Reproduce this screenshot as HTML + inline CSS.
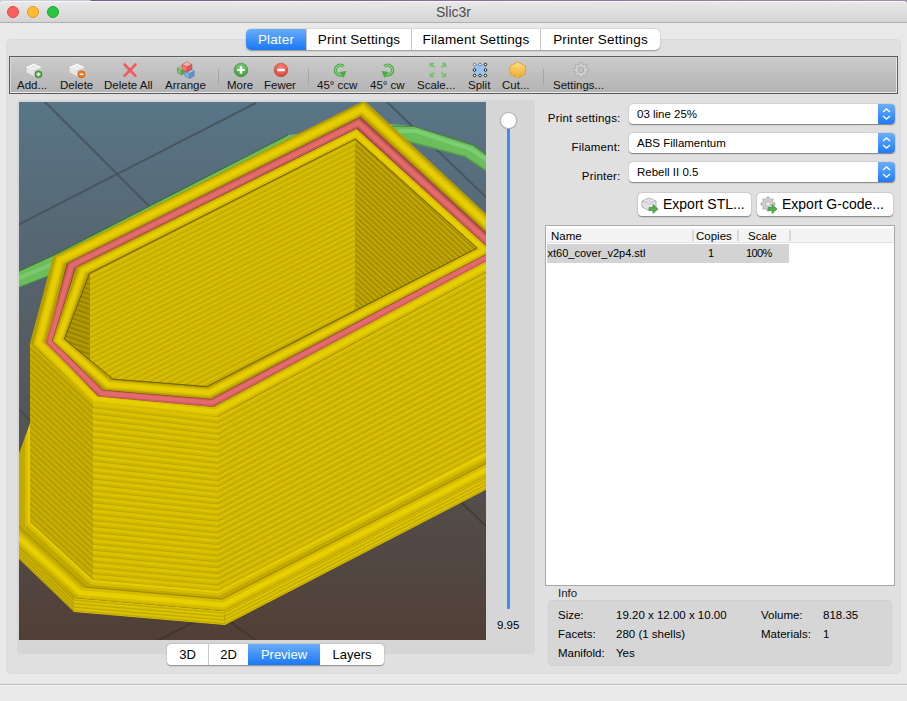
<!DOCTYPE html>
<html><head><meta charset="utf-8">
<style>
*{margin:0;padding:0;box-sizing:border-box}
html,body{width:907px;height:701px;overflow:hidden;background:#e9e9e9;font-family:"Liberation Sans",sans-serif;color:#000}
.abs{position:absolute}
#desk{left:0;top:0;width:907px;height:5px;background:linear-gradient(90deg,#c9ced8 0,#c3c8d2 90px,#7a5a8a 91px,#8c6a9a 50%,#a58aae 100%)}
#title{left:0;top:1px;width:907px;height:22px;background:linear-gradient(#e9e9e9,#d4d4d4);border-bottom:1px solid #b0b0b0;border-radius:4px 4px 0 0;box-shadow:inset 0 1px #f7f7f7}
.tl{top:5px;width:12px;height:12px;border-radius:50%}
#ttext{left:0;width:907px;top:3px;text-align:center;font-size:14px;color:#4d4d4d}
#body{left:0;top:23px;width:907px;height:678px;background:#e9e9e9}
#group{left:6px;top:39px;width:895px;height:635px;background:#e0e0e0;border:1px solid #dadada;border-radius:5px}
#tabs{left:246px;top:29px;width:414px;height:21px;background:#fff;border-radius:5px;box-shadow:0 0.5px 1.5px rgba(0,0,0,.35);font-size:13.5px;letter-spacing:0.15px}
.tab{position:absolute;top:0;height:21px;line-height:21px;text-align:center}
#toolbar{left:9px;top:56px;width:889px;height:38px;border:1px solid #5b5b5b;background:linear-gradient(#cbcbcb,#b3b3b3)}
#toolbar:after{content:"";position:absolute;left:0;top:0;right:0;bottom:0;border:1px solid #e9e9e9;border-top-color:#d9d9d9;border-left-color:#d9d9d9}
.tbt{position:absolute;top:79px;font-size:11.5px;white-space:nowrap;color:#111}
.sep{position:absolute;top:69px;width:1px;height:16px;background:#a6a6a6}
#frame{left:17px;top:100px;width:518px;height:554px;background:#d6d6d6;border-radius:4px}
#canvas{left:19px;top:102px;width:467px;height:538px;overflow:hidden}
#seg{left:167px;top:644px;width:217px;height:21px;background:#fff;border-radius:4px;box-shadow:0 0.5px 1.5px rgba(0,0,0,.4);font-size:13px}
.lbl{position:absolute;font-size:11.5px;white-space:nowrap;text-align:right;letter-spacing:0.2px;width:120px}
.combo{position:absolute;left:629px;width:266px;height:20px;background:#fff;border-radius:4px;box-shadow:0 0.5px 1.2px rgba(0,0,0,.45);font-size:11.5px}
.combo span{position:absolute;left:8px;top:4px}
.step{position:absolute;right:0;top:0;width:17px;height:20px;background:linear-gradient(#6aaefc,#1f7bf6);border-radius:0 4px 4px 0}
.btn{position:absolute;top:193px;height:23px;background:#fff;border-radius:4px;box-shadow:0 0.5px 1.5px rgba(0,0,0,.45);font-size:14px}
#list{left:545px;top:225px;width:350px;height:361px;background:#fff;border:1px solid #a9a9a9}
#info{left:548px;top:600px;width:344px;height:66px;background:#d6d6d6;border:1px solid #d0d0d0;border-radius:5px}
.it{position:absolute;font-size:11.5px;white-space:nowrap}
#status{left:0;top:684px;width:907px;height:17px;background:#e9e9e9;border-top:1px solid #bdbdbd;box-shadow:inset 0 1px #f7f7f7}
</style></head><body>
<div class="abs" id="body"></div>
<div class="abs" id="desk"></div>
<div class="abs" id="title">
 <div class="abs tl" style="left:7px;background:#fc605c;border:0.5px solid #de4a46"></div>
 <div class="abs tl" style="left:27px;background:#fdbb2f;border:0.5px solid #dc9c1d"></div>
 <div class="abs tl" style="left:47px;background:#2ac640;border:0.5px solid #1ea32f"></div>
 <div class="abs" id="ttext">Slic3r</div>
</div>
<div class="abs" id="group"></div>
<div class="abs" id="status"></div>

<!-- tabs -->
<div class="abs" id="tabs">
 <div class="tab" style="left:0;width:60px;background:linear-gradient(#69acfb,#1a78f5);color:#fff;border-radius:5px 0 0 5px">Plater</div>
 <div class="tab" style="left:60px;width:105px;border-left:1px solid #c8c8c8">Print Settings</div>
 <div class="tab" style="left:165px;width:129px;border-left:1px solid #c8c8c8">Filament Settings</div>
 <div class="tab" style="left:294px;width:120px;border-left:1px solid #c8c8c8">Printer Settings</div>
</div>

<!-- toolbar -->
<div class="abs" id="toolbar"></div>
<div id="tbitems">
<svg class="abs" style="left:0;top:56px" width="620" height="30" viewBox="0 56 620 30">
 <defs>
  <linearGradient id="brk" x1="0" y1="0" x2="1" y2="1"><stop offset="0" stop-color="#ffffff"/><stop offset="1" stop-color="#c9c9c9"/></linearGradient>
  <radialGradient id="gbtn" cx="0.5" cy="0.35" r="0.6"><stop offset="0" stop-color="#8fd88a"/><stop offset="1" stop-color="#3f9f3c"/></radialGradient>
  <radialGradient id="rbtn" cx="0.5" cy="0.35" r="0.6"><stop offset="0" stop-color="#ff8b7e"/><stop offset="1" stop-color="#d9463b"/></radialGradient>
  <linearGradient id="cutg" x1="0" y1="0" x2="0" y2="1"><stop offset="0" stop-color="#ffe08a"/><stop offset="1" stop-color="#e9a62a"/></linearGradient>
 </defs>
 <!-- Add brick -->
 <g transform="translate(26,62)">
  <path d="M0,5 L8,1.5 L15.5,5 L15.5,10.5 L8,14.5 L0,10.5 Z" fill="#e6e6e6" stroke="#b3b3b3" stroke-width="0.6"/>
  <path d="M0,5 L8,8.5 L15.5,5 L8,1.5 Z" fill="#fbfbfb"/>
  <path d="M8,8.5 L15.5,5 L15.5,10.5 L8,14.5 Z" fill="#d0d0d0"/>
  <ellipse cx="5" cy="4.2" rx="2.2" ry="1.3" fill="#fff" stroke="#c8c8c8" stroke-width="0.5"/>
  <ellipse cx="10.5" cy="4.2" rx="2.2" ry="1.3" fill="#fff" stroke="#c8c8c8" stroke-width="0.5"/>
  <ellipse cx="8" cy="6.5" rx="2.2" ry="1.3" fill="#fff" stroke="#c8c8c8" stroke-width="0.5"/>
  <circle cx="12.5" cy="12.3" r="3.6" fill="#4aa63f" stroke="#2f7d28" stroke-width="0.6"/>
  <path d="M10.6,12.3 H14.4 M12.5,10.4 V14.2" stroke="#fff" stroke-width="1.4"/>
 </g>
 <!-- Delete brick -->
 <g transform="translate(69,62)">
  <path d="M0,5 L8,1.5 L15.5,5 L15.5,10.5 L8,14.5 L0,10.5 Z" fill="#e6e6e6" stroke="#b3b3b3" stroke-width="0.6"/>
  <path d="M0,5 L8,8.5 L15.5,5 L8,1.5 Z" fill="#fbfbfb"/>
  <path d="M8,8.5 L15.5,5 L15.5,10.5 L8,14.5 Z" fill="#d0d0d0"/>
  <ellipse cx="5" cy="4.2" rx="2.2" ry="1.3" fill="#fff" stroke="#c8c8c8" stroke-width="0.5"/>
  <ellipse cx="10.5" cy="4.2" rx="2.2" ry="1.3" fill="#fff" stroke="#c8c8c8" stroke-width="0.5"/>
  <ellipse cx="8" cy="6.5" rx="2.2" ry="1.3" fill="#fff" stroke="#c8c8c8" stroke-width="0.5"/>
  <circle cx="12.5" cy="12.3" r="3.6" fill="#ef7a1f" stroke="#c45a10" stroke-width="0.6"/>
  <path d="M10.6,12.3 H14.4" stroke="#fff" stroke-width="1.4"/>
 </g>
 <!-- Delete all X -->
 <path d="M124.5,64.5 L135.5,75.8 M135.5,64.5 L124.5,75.8" stroke="#f25a5a" stroke-width="2.6" stroke-linecap="round"/>
 <!-- Arrange -->
 <g><polygon points="181.5,66.1 185.7,68.3 181.5,70.5 177.3,68.3" fill="#9fd695" stroke="#4f8f45" stroke-width="0.5"/><polygon points="177.3,68.3 181.5,70.5 181.5,74.9 177.3,72.7" fill="#7fbf72" stroke="#4f8f45" stroke-width="0.5"/><polygon points="181.5,70.5 185.7,68.3 185.7,72.7 181.5,74.9" fill="#62a457" stroke="#4f8f45" stroke-width="0.5"/><polygon points="189.5,68.5 194.2,71.1 189.5,73.5 184.8,71.1" fill="#a9cdf2" stroke="#4a7db5" stroke-width="0.5"/><polygon points="184.8,71.1 189.5,73.5 189.5,78.5 184.8,76.0" fill="#7fb0e3" stroke="#4a7db5" stroke-width="0.5"/><polygon points="189.5,73.5 194.2,71.1 194.2,76.0 189.5,78.5" fill="#5f92c8" stroke="#4a7db5" stroke-width="0.5"/><polygon points="187.0,61.8 191.9,64.4 187.0,67.0 182.1,64.4" fill="#ffb0ae" stroke="#b84444" stroke-width="0.5"/><polygon points="182.1,64.4 187.0,67.0 187.0,72.2 182.1,69.7" fill="#f07a78" stroke="#b84444" stroke-width="0.5"/><polygon points="187.0,67.0 191.9,64.4 191.9,69.7 187.0,72.2" fill="#d65a58" stroke="#b84444" stroke-width="0.5"/></g>
 <!-- More / Fewer -->
 <circle cx="241" cy="70" r="6.8" fill="url(#gbtn)" stroke="#3b8c37" stroke-width="0.6"/>
 <path d="M237.3,70 H244.7 M241,66.3 V73.7" stroke="#fff" stroke-width="2.2"/>
 <circle cx="281" cy="70" r="6.8" fill="url(#rbtn)" stroke="#c0453b" stroke-width="0.6"/>
 <path d="M277.2,70 H284.8" stroke="#fff" stroke-width="2.4"/>
 <!-- rotate ccw -->
 <g fill="none" stroke="#4aa845" stroke-width="3.2">
  <path d="M343.6,66.2 A5,5 0 1 0 342.5,74.6"/>
  <path d="M384.4,66.2 A5,5 0 1 1 385.5,74.6"/>
 </g>
 <g fill="none" stroke="#9ee09a" stroke-width="1">
  <path d="M343.6,66.2 A5,5 0 1 0 342.5,74.6"/>
  <path d="M384.4,66.2 A5,5 0 1 1 385.5,74.6"/>
 </g>
 <path d="M339.5,72 L346.5,71 L343.5,78 Z" fill="#4aa845"/>
 <path d="M388.5,72 L381.5,71 L384.5,78 Z" fill="#4aa845"/>
 <!-- scale arrows -->
 <g stroke="#6cc466" stroke-width="1.6" fill="none">
  <path d="M431,64 L434.5,67.5 M430.5,63.5 h3.5 M430.5,63.5 v3.5"/>
  <path d="M445,64 L441.5,67.5 M445.5,63.5 h-3.5 M445.5,63.5 v3.5"/>
  <path d="M431,76 L434.5,72.5 M430.5,76.5 h3.5 M430.5,76.5 v-3.5"/>
  <path d="M445,76 L441.5,72.5 M445.5,76.5 h-3.5 M445.5,76.5 v-3.5"/>
 </g>
 <!-- split -->
 <rect x="474.5" y="64.5" width="11" height="11" fill="#9cc2f0" stroke="#7aa2d8" stroke-width="0.6"/>
 <g fill="#fff" stroke="#222" stroke-width="1">
  <circle cx="474.5" cy="64.5" r="1.3" stroke="#777"/><circle cx="480" cy="64.5" r="1.3" stroke="#777"/><circle cx="485.5" cy="64.5" r="1.3"/>
  <circle cx="474.5" cy="70" r="1.3"/><circle cx="485.5" cy="70" r="1.3"/>
  <circle cx="474.5" cy="75.5" r="1.3"/><circle cx="480" cy="75.5" r="1.3"/><circle cx="485.5" cy="75.5" r="1.3"/>
 </g>
 <!-- cut box -->
 <path d="M517.8,62 L525.5,66 L525.5,74 L517.8,78 L510,74 L510,66 Z" fill="url(#cutg)" stroke="#d99a2a" stroke-width="0.8"/>
 <path d="M510,66 L517.8,70 L525.5,66 M517.8,70 V78" fill="none" stroke="#f4c050" stroke-width="0.8"/>
 <!-- gear -->
 <g transform="translate(581,70)">
  <path d="M-1.2,-7.5 L1.2,-7.5 L1.8,-5.3 L2.9,-4.8 L4.9,-6 L6,-4.9 L4.8,-2.9 L5.3,-1.8 L7.5,-1.2 L7.5,1.2 L5.3,1.8 L4.8,2.9 L6,4.9 L4.9,6 L2.9,4.8 L1.8,5.3 L1.2,7.5 L-1.2,7.5 L-1.8,5.3 L-2.9,4.8 L-4.9,6 L-6,4.9 L-4.8,2.9 L-5.3,1.8 L-7.5,1.2 L-7.5,-1.2 L-5.3,-1.8 L-4.8,-2.9 L-6,-4.9 L-4.9,-6 L-2.9,-4.8 L-1.8,-5.3 Z" fill="#d0d0d0" stroke="#a3a3a3" stroke-width="0.7"/>
  <circle r="2.8" fill="#c2c2c2" stroke="#9a9a9a" stroke-width="0.7"/>
 </g>
</svg>
<div class="tbt" style="left:17px">Add...</div>
<div class="tbt" style="left:60px">Delete</div>
<div class="tbt" style="left:104px">Delete All</div>
<div class="tbt" style="left:165px">Arrange</div>
<div class="sep" style="left:218px"></div>
<div class="tbt" style="left:227px">More</div>
<div class="tbt" style="left:264px">Fewer</div>
<div class="sep" style="left:308px"></div>
<div class="tbt" style="left:317px">45° ccw</div>
<div class="tbt" style="left:370px">45° cw</div>
<div class="tbt" style="left:417px">Scale...</div>
<div class="tbt" style="left:468px">Split</div>
<div class="tbt" style="left:502px">Cut...</div>
<div class="sep" style="left:543px"></div>
<div class="tbt" style="left:553px">Settings...</div>
</div>

<!-- 3D frame -->
<div class="abs" id="frame"></div>
<div class="abs" id="canvas">
<svg width="467" height="538" viewBox="19 102 467 538">
<defs>
<linearGradient id="bg" x1="0" y1="0" x2="0" y2="1"><stop offset="0" stop-color="#587587"/><stop offset="1" stop-color="#513f36"/></linearGradient>
<linearGradient id="sFRg" x1="0" y1="0" x2="0" y2="1"><stop offset="0" stop-color="#dfc700"/><stop offset="0.55" stop-color="#dfc700"/><stop offset="1" stop-color="#b59d00"/></linearGradient>
<pattern id="sFR" patternUnits="userSpaceOnUse" width="40" height="3.54" patternTransform="skewY(-27.47)"><rect width="40" height="3.54" fill="url(#sFRg)"/></pattern>
<linearGradient id="sFLg" x1="0" y1="0" x2="0" y2="1"><stop offset="0" stop-color="#e0c800"/><stop offset="0.55" stop-color="#e0c800"/><stop offset="1" stop-color="#b9a100"/></linearGradient>
<pattern id="sFL" patternUnits="userSpaceOnUse" width="40" height="3.54" patternTransform="skewY(3.43)"><rect width="40" height="3.54" fill="url(#sFLg)"/></pattern>
<linearGradient id="sLg" x1="0" y1="0" x2="0" y2="1"><stop offset="0" stop-color="#c9b100"/><stop offset="0.55" stop-color="#c9b100"/><stop offset="1" stop-color="#9a8300"/></linearGradient>
<pattern id="sL" patternUnits="userSpaceOnUse" width="40" height="3.54" patternTransform="skewY(43.53)"><rect width="40" height="3.54" fill="url(#sLg)"/></pattern>
<linearGradient id="sBLg" x1="0" y1="0" x2="0" y2="1"><stop offset="0" stop-color="#dcc300"/><stop offset="0.55" stop-color="#dcc300"/><stop offset="1" stop-color="#b09800"/></linearGradient>
<pattern id="sBL" patternUnits="userSpaceOnUse" width="40" height="3.3" patternTransform="skewY(-26.57)"><rect width="40" height="3.3" fill="url(#sBLg)"/></pattern>
<linearGradient id="sBRg" x1="0" y1="0" x2="0" y2="1"><stop offset="0" stop-color="#c6ad00"/><stop offset="0.55" stop-color="#c6ad00"/><stop offset="1" stop-color="#957e00"/></linearGradient>
<pattern id="sBR" patternUnits="userSpaceOnUse" width="40" height="3.3" patternTransform="skewY(42.61)"><rect width="40" height="3.3" fill="url(#sBRg)"/></pattern>
<linearGradient id="sILg" x1="0" y1="0" x2="0" y2="1"><stop offset="0" stop-color="#b8a000"/><stop offset="0.55" stop-color="#b8a000"/><stop offset="1" stop-color="#8f7900"/></linearGradient>
<pattern id="sIL" patternUnits="userSpaceOnUse" width="40" height="3.3" patternTransform="skewY(16.70)"><rect width="40" height="3.3" fill="url(#sILg)"/></pattern>
</defs>
<rect x="19" y="102" width="467" height="538" fill="url(#bg)"/>
<line x1="44" y1="101" x2="160" y2="217" stroke="#45525b" stroke-width="2" opacity="0.85"/>
<line x1="18" y1="225" x2="256" y2="103" stroke="#45525b" stroke-width="2" opacity="0.85"/>
<line x1="387" y1="102" x2="490" y2="201" stroke="#46535c" stroke-width="2" opacity="0.85"/>
<line x1="19" y1="409" x2="40" y2="430" stroke="#444a4f" stroke-width="2" opacity="0.85"/>
<line x1="155" y1="642" x2="225" y2="606" stroke="#3f3632" stroke-width="2" opacity="0.85"/>
<line x1="225" y1="618" x2="258" y2="642" stroke="#3f3632" stroke-width="2" opacity="0.85"/>
<line x1="459" y1="500" x2="490" y2="530" stroke="#423a36" stroke-width="2" opacity="0.85"/>
<polygon points="17.0,272.0 53.0,255.5 288.0,135.0 392.0,124.0 415.0,126.5 474.0,145.5 488.0,156.0 488.0,172.0 465.0,156.5 405.0,140.5 300.0,150.0 53.0,274.0 17.0,288.0" fill="#6cbd5c"/>
<polyline points="17.0,288.0 53.0,274.0" fill="none" stroke="#4f8f45" stroke-width="1"/>
<polyline points="405.0,140.5 465.0,156.5 488.0,172.0" fill="none" stroke="#5a9a4c" stroke-width="1.5"/>
<polyline points="17.0,272.0 53.0,255.5 288.0,135.0" fill="none" stroke="#3f6e38" stroke-width="1.2"/>
<polyline points="392.0,126.0 415.0,126.5 474.0,145.5 488.0,156.0" fill="none" stroke="#4a7f40" stroke-width="1.2"/>
<polyline points="398.0,131.0 416.0,131.0 471.0,149.0 488.0,161.0" fill="none" stroke="#82d276" stroke-width="4" opacity="0.8"/>
<polyline points="17.0,279.0 53.0,264.0" fill="none" stroke="#82d276" stroke-width="4" opacity="0.7"/>
<clipPath id="cf1"><polygon points="-7.0,520.0 74.0,598.0 74.0,612.0 -7.0,534.0"/></clipPath>
<polygon points="-7.0,520.0 74.0,598.0 74.0,612.0 -7.0,534.0" fill="#d0b800"/>
<path d="M-23.2,506.15 L90.2,615.35 M-23.2,509.65 L90.2,618.85 M-23.2,513.15 L90.2,622.35 M-23.2,516.65 L90.2,625.85 M-23.2,520.15 L90.2,629.35" stroke="#a08800" stroke-width="1.3" fill="none" clip-path="url(#cf1)" opacity="0.3"/>
<path d="M-23.2,506.73 L90.2,615.94 M-23.2,510.23 L90.2,619.44 M-23.2,513.74 L90.2,622.94 M-23.2,517.24 L90.2,626.44 M-23.2,520.74 L90.2,629.94" stroke="#a08800" stroke-width="0.9" fill="none" clip-path="url(#cf1)" opacity="0.6"/>
<clipPath id="cf2"><polygon points="74.0,598.0 224.0,611.0 225.0,625.0 74.0,612.0"/></clipPath>
<polygon points="74.0,598.0 224.0,611.0 225.0,625.0 74.0,612.0" fill="#ddc500"/>
<path d="M44.0,597.15 L254.2,615.35 M43.9,600.65 L254.4,618.85 M43.9,604.15 L254.8,622.35 M43.8,607.65 L255.1,625.85 M43.8,611.15 L255.3,629.35" stroke="#b09800" stroke-width="1.3" fill="none" clip-path="url(#cf2)" opacity="0.3"/>
<path d="M44.0,597.74 L254.2,615.94 M43.9,601.24 L254.4,619.44 M43.9,604.74 L254.8,622.94 M43.8,608.24 L255.1,626.44 M43.8,611.74 L255.3,629.94" stroke="#b09800" stroke-width="0.9" fill="none" clip-path="url(#cf2)" opacity="0.6"/>
<clipPath id="cf3"><polygon points="224.0,611.0 530.0,453.0 530.0,467.0 225.0,625.0"/></clipPath>
<polygon points="224.0,611.0 530.0,453.0 530.0,467.0 225.0,625.0" fill="#ddc500"/>
<path d="M162.9,644.35 L591.2,423.15 M163.2,647.85 L591.1,426.65 M163.6,651.35 L591.1,430.15 M163.8,654.85 L591.0,433.65 M164.2,658.35 L591.0,437.15" stroke="#b09800" stroke-width="1.3" fill="none" clip-path="url(#cf3)" opacity="0.3"/>
<path d="M162.9,644.94 L591.2,423.73 M163.2,648.44 L591.1,427.23 M163.6,651.94 L591.1,430.73 M163.8,655.44 L591.0,434.23 M164.2,658.94 L591.0,437.73" stroke="#b09800" stroke-width="0.9" fill="none" clip-path="url(#cf3)" opacity="0.6"/>
<clipPath id="cbt"><polygon points="30.0,424.0 -7.0,522.0 74.0,598.0 224.0,611.0 530.0,453.0 530.0,420.0 30.0,400.0"/></clipPath>
<polygon points="30.0,424.0 -7.0,522.0 74.0,598.0 224.0,611.0 530.0,453.0 530.0,420.0 30.0,400.0" fill="#c2a900"/>
<g clip-path="url(#cbt)">
<polyline points="33.0,380.0 -10.0,512.0 80.0,592.5 223.5,605.0 530.0,447.0" fill="none" stroke="#d6bd00" stroke-width="10" stroke-linejoin="miter"/>
<polyline points="33.0,380.0 -10.0,512.0 80.0,592.5 223.5,605.0 530.0,447.0" fill="none" stroke="#e8d000" stroke-width="4.5" stroke-linejoin="miter"/>
<polyline points="30.0,380.0 30.0,522.0 93.0,580.0 218.0,591.0 530.0,431.0" fill="none" stroke="#d6bd00" stroke-width="10" stroke-linejoin="miter"/>
<polyline points="30.0,380.0 30.0,522.0 93.0,580.0 218.0,591.0 530.0,431.0" fill="none" stroke="#e6ce00" stroke-width="4" stroke-linejoin="miter"/>
<polyline points="36.0,400.0 -4.0,506.0 86.0,587.0 222.0,599.0 530.0,441.0" fill="none" stroke="#9c8500" stroke-width="0.9"/>
</g>
<clipPath id="cf4"><polygon points="30.0,343.0 93.0,402.0 93.0,580.0 30.0,522.0"/></clipPath>
<polygon points="30.0,343.0 93.0,402.0 93.0,580.0 30.0,522.0" fill="#cbb300"/>
<path d="M17.4,335.98 L105.6,418.54 M17.4,341.95 L105.6,424.47 M17.4,347.93 L105.6,430.39 M17.4,353.90 L105.6,436.32 M17.4,359.87 L105.6,442.25 M17.4,365.85 L105.6,448.17 M17.4,371.82 L105.6,454.10 M17.4,377.79 L105.6,460.03 M17.4,383.77 L105.6,465.95 M17.4,389.74 L105.6,471.88 M17.4,395.71 L105.6,477.81 M17.4,401.69 L105.6,483.73 M17.4,407.66 L105.6,489.66 M17.4,413.63 L105.6,495.59 M17.4,419.61 L105.6,501.51 M17.4,425.58 L105.6,507.44 M17.4,431.55 L105.6,513.37 M17.4,437.53 L105.6,519.29 M17.4,443.50 L105.6,525.22 M17.4,449.47 L105.6,531.15 M17.4,455.45 L105.6,537.07 M17.4,461.42 L105.6,543.00 M17.4,467.39 L105.6,548.93 M17.4,473.37 L105.6,554.85 M17.4,479.34 L105.6,560.78 M17.4,485.31 L105.6,566.71 M17.4,491.29 L105.6,572.63 M17.4,497.26 L105.6,578.56 M17.4,503.23 L105.6,584.49 M17.4,509.21 L105.6,590.41 M17.4,515.18 L105.6,596.34" stroke="#9c8500" stroke-width="2.6" fill="none" clip-path="url(#cf4)" opacity="0.3"/>
<path d="M17.4,337.15 L105.6,419.71 M17.4,343.12 L105.6,425.64 M17.4,349.10 L105.6,431.56 M17.4,355.07 L105.6,437.49 M17.4,361.04 L105.6,443.42 M17.4,367.02 L105.6,449.34 M17.4,372.99 L105.6,455.27 M17.4,378.96 L105.6,461.20 M17.4,384.94 L105.6,467.12 M17.4,390.91 L105.6,473.05 M17.4,396.88 L105.6,478.98 M17.4,402.86 L105.6,484.90 M17.4,408.83 L105.6,490.83 M17.4,414.80 L105.6,496.76 M17.4,420.78 L105.6,502.68 M17.4,426.75 L105.6,508.61 M17.4,432.72 L105.6,514.54 M17.4,438.70 L105.6,520.46 M17.4,444.67 L105.6,526.39 M17.4,450.64 L105.6,532.32 M17.4,456.62 L105.6,538.24 M17.4,462.59 L105.6,544.17 M17.4,468.56 L105.6,550.10 M17.4,474.54 L105.6,556.02 M17.4,480.51 L105.6,561.95 M17.4,486.48 L105.6,567.88 M17.4,492.46 L105.6,573.80 M17.4,498.43 L105.6,579.73 M17.4,504.40 L105.6,585.66 M17.4,510.38 L105.6,591.58 M17.4,516.35 L105.6,597.51" stroke="#9c8500" stroke-width="0.9" fill="none" clip-path="url(#cf4)" opacity="0.6"/>
<clipPath id="cf5"><polygon points="93.0,402.0 218.0,417.0 218.0,591.0 93.0,580.0"/></clipPath>
<polygon points="93.0,402.0 218.0,417.0 218.0,591.0 93.0,580.0" fill="#dbc300"/>
<path d="M68.0,403.77 L243.0,424.62 M68.0,409.73 L243.0,430.39 M68.0,415.69 L243.0,436.17 M68.0,421.65 L243.0,441.94 M68.0,427.61 L243.0,447.71 M68.0,433.57 L243.0,453.49 M68.0,439.53 L243.0,459.26 M68.0,445.49 L243.0,465.03 M68.0,451.45 L243.0,470.81 M68.0,457.41 L243.0,476.58 M68.0,463.37 L243.0,482.35 M68.0,469.33 L243.0,488.13 M68.0,475.29 L243.0,493.90 M68.0,481.25 L243.0,499.67 M68.0,487.21 L243.0,505.45 M68.0,493.17 L243.0,511.22 M68.0,499.13 L243.0,516.99 M68.0,505.09 L243.0,522.77 M68.0,511.05 L243.0,528.54 M68.0,517.01 L243.0,534.31 M68.0,522.97 L243.0,540.09 M68.0,528.93 L243.0,545.86 M68.0,534.89 L243.0,551.63 M68.0,540.85 L243.0,557.41 M68.0,546.81 L243.0,563.18 M68.0,552.77 L243.0,568.95 M68.0,558.73 L243.0,574.73 M68.0,564.69 L243.0,580.50 M68.0,570.65 L243.0,586.27 M68.0,576.61 L243.0,592.05 M68.0,582.57 L243.0,597.82" stroke="#b09800" stroke-width="2.6" fill="none" clip-path="url(#cf5)" opacity="0.3"/>
<path d="M68.0,404.94 L243.0,425.79 M68.0,410.90 L243.0,431.56 M68.0,416.86 L243.0,437.34 M68.0,422.82 L243.0,443.11 M68.0,428.78 L243.0,448.88 M68.0,434.74 L243.0,454.66 M68.0,440.70 L243.0,460.43 M68.0,446.66 L243.0,466.20 M68.0,452.62 L243.0,471.98 M68.0,458.58 L243.0,477.75 M68.0,464.54 L243.0,483.52 M68.0,470.50 L243.0,489.30 M68.0,476.46 L243.0,495.07 M68.0,482.42 L243.0,500.84 M68.0,488.38 L243.0,506.62 M68.0,494.34 L243.0,512.39 M68.0,500.30 L243.0,518.16 M68.0,506.26 L243.0,523.94 M68.0,512.22 L243.0,529.71 M68.0,518.18 L243.0,535.48 M68.0,524.14 L243.0,541.26 M68.0,530.10 L243.0,547.03 M68.0,536.06 L243.0,552.80 M68.0,542.02 L243.0,558.58 M68.0,547.98 L243.0,564.35 M68.0,553.94 L243.0,570.12 M68.0,559.90 L243.0,575.90 M68.0,565.86 L243.0,581.67 M68.0,571.82 L243.0,587.44 M68.0,577.78 L243.0,593.22 M68.0,583.74 L243.0,598.99" stroke="#b09800" stroke-width="0.9" fill="none" clip-path="url(#cf5)" opacity="0.6"/>
<clipPath id="cf6"><polygon points="218.0,417.0 526.0,251.0 526.0,431.0 218.0,591.0"/></clipPath>
<polygon points="218.0,417.0 526.0,251.0 526.0,431.0 218.0,591.0" fill="#d9c100"/>
<path d="M156.4,454.81 L587.6,222.63 M156.4,460.57 L587.6,228.67 M156.4,466.33 L587.6,234.71 M156.4,472.09 L587.6,240.75 M156.4,477.85 L587.6,246.79 M156.4,483.61 L587.6,252.83 M156.4,489.37 L587.6,258.87 M156.4,495.13 L587.6,264.91 M156.4,500.89 L587.6,270.95 M156.4,506.65 L587.6,276.99 M156.4,512.41 L587.6,283.03 M156.4,518.17 L587.6,289.07 M156.4,523.93 L587.6,295.11 M156.4,529.69 L587.6,301.15 M156.4,535.45 L587.6,307.19 M156.4,541.21 L587.6,313.23 M156.4,546.97 L587.6,319.27 M156.4,552.73 L587.6,325.31 M156.4,558.49 L587.6,331.35 M156.4,564.25 L587.6,337.39 M156.4,570.01 L587.6,343.43 M156.4,575.77 L587.6,349.47 M156.4,581.53 L587.6,355.51 M156.4,587.29 L587.6,361.55 M156.4,593.05 L587.6,367.59 M156.4,598.81 L587.6,373.63 M156.4,604.57 L587.6,379.67 M156.4,610.33 L587.6,385.71 M156.4,616.09 L587.6,391.75 M156.4,621.85 L587.6,397.79 M156.4,627.61 L587.6,403.83" stroke="#ad9500" stroke-width="2.6" fill="none" clip-path="url(#cf6)" opacity="0.3"/>
<path d="M156.4,455.98 L587.6,223.80 M156.4,461.74 L587.6,229.84 M156.4,467.50 L587.6,235.88 M156.4,473.26 L587.6,241.92 M156.4,479.02 L587.6,247.96 M156.4,484.78 L587.6,254.00 M156.4,490.54 L587.6,260.04 M156.4,496.30 L587.6,266.08 M156.4,502.06 L587.6,272.12 M156.4,507.82 L587.6,278.16 M156.4,513.58 L587.6,284.20 M156.4,519.34 L587.6,290.24 M156.4,525.10 L587.6,296.28 M156.4,530.86 L587.6,302.32 M156.4,536.62 L587.6,308.36 M156.4,542.38 L587.6,314.40 M156.4,548.14 L587.6,320.44 M156.4,553.90 L587.6,326.48 M156.4,559.66 L587.6,332.52 M156.4,565.42 L587.6,338.56 M156.4,571.18 L587.6,344.60 M156.4,576.94 L587.6,350.64 M156.4,582.70 L587.6,356.68 M156.4,588.46 L587.6,362.72 M156.4,594.22 L587.6,368.76 M156.4,599.98 L587.6,374.80 M156.4,605.74 L587.6,380.84 M156.4,611.50 L587.6,386.88 M156.4,617.26 L587.6,392.92 M156.4,623.02 L587.6,398.96 M156.4,628.78 L587.6,405.00" stroke="#ad9500" stroke-width="0.9" fill="none" clip-path="url(#cf6)" opacity="0.6"/>
<path d="M53.0,257.0 L364.5,100.5 L526.0,251.0 L218.0,417.0 L93.0,402.0 L30.0,343.0 Z M47.0,343.0 L98.0,396.0 L213.0,406.5 L505.0,250.0 L360.7,117.0 L67.0,263.5 Z" fill="#b89f00" fill-rule="evenodd"/>
<path d="M60.0,260.2 L362.6,108.8 L515.5,250.5 L215.5,411.8 L95.5,399.0 L38.5,343.0 Z" fill="none" stroke="#d6bd00" stroke-width="9.0" stroke-linejoin="miter"/>
<path d="M60.0,260.2 L362.6,108.8 L515.5,250.5 L215.5,411.8 L95.5,399.0 L38.5,343.0 Z" fill="none" stroke="#e6ce00" stroke-width="4.8" stroke-linejoin="miter"/>
<path d="M67.0,263.5 L360.7,117.0 L505.0,250.0 L213.0,406.5 L98.0,396.0 L47.0,343.0 Z" fill="none" stroke="#6e5f00" stroke-width="0.8"/>
<path d="M67.0,263.5 L360.7,117.0 L505.0,250.0 L213.0,406.5 L98.0,396.0 L47.0,343.0 Z M52.5,341.0 L103.5,390.0 L211.0,399.0 L491.0,251.5 L356.4,129.0 L76.0,267.5 Z" fill="#a84a4a" fill-rule="evenodd"/>
<path d="M71.5,265.5 L358.5,123.0 L498.0,250.8 L212.0,402.8 L100.8,393.0 L49.8,342.0 Z" fill="none" stroke="#cf5d5d" stroke-width="7.5" stroke-linejoin="miter"/>
<path d="M71.5,265.5 L358.5,123.0 L498.0,250.8 L212.0,402.8 L100.8,393.0 L49.8,342.0 Z" fill="none" stroke="#e26c6c" stroke-width="4.0" stroke-linejoin="miter"/>
<path d="M76.0,267.5 L356.4,129.0 L491.0,251.5 L211.0,399.0 L103.5,390.0 L52.5,341.0 Z" fill="none" stroke="#6e3030" stroke-width="0.8"/>
<path d="M76.0,267.5 L356.4,129.0 L491.0,251.5 L211.0,399.0 L103.5,390.0 L52.5,341.0 Z M64.5,339.0 L113.0,379.0 L207.0,386.5 L477.0,248.0 L355.5,139.0 L89.5,273.7 Z" fill="#b89f00" fill-rule="evenodd"/>
<path d="M82.8,270.6 L355.9,134.0 L484.0,249.8 L209.0,392.8 L108.2,384.5 L58.5,340.0 Z" fill="none" stroke="#d6bd00" stroke-width="8.2" stroke-linejoin="miter"/>
<path d="M82.8,270.6 L355.9,134.0 L484.0,249.8 L209.0,392.8 L108.2,384.5 L58.5,340.0 Z" fill="none" stroke="#e6ce00" stroke-width="4.4" stroke-linejoin="miter"/>
<path d="M89.5,273.7 L355.5,139.0 L477.0,248.0 L207.0,386.5 L113.0,379.0 L64.5,339.0 Z" fill="none" stroke="#6a5a00" stroke-width="0.8"/>
<clipPath id="cf7"><polygon points="89.5,273.7 355.5,139.0 355.5,310.3 207.0,386.5 113.0,379.0 89.5,359.6"/></clipPath>
<polygon points="89.5,273.7 355.5,139.0 355.5,310.3 207.0,386.5 113.0,379.0 89.5,359.6" fill="#d8bf00"/>
<path d="M84.5,-9.97 L360.5,-149.63 M84.5,-4.67 L360.5,-144.33 M84.5,0.63 L360.5,-139.03 M84.5,5.93 L360.5,-133.73 M84.5,11.23 L360.5,-128.43 M84.5,16.53 L360.5,-123.13 M84.5,21.83 L360.5,-117.83 M84.5,27.13 L360.5,-112.53 M84.5,32.43 L360.5,-107.23 M84.5,37.73 L360.5,-101.93 M84.5,43.03 L360.5,-96.63 M84.5,48.33 L360.5,-91.33 M84.5,53.63 L360.5,-86.03 M84.5,58.93 L360.5,-80.73 M84.5,64.23 L360.5,-75.43 M84.5,69.53 L360.5,-70.13 M84.5,74.83 L360.5,-64.83 M84.5,80.13 L360.5,-59.53 M84.5,85.43 L360.5,-54.23 M84.5,90.73 L360.5,-48.93 M84.5,96.03 L360.5,-43.63 M84.5,101.33 L360.5,-38.33 M84.5,106.63 L360.5,-33.03 M84.5,111.93 L360.5,-27.73 M84.5,117.23 L360.5,-22.43 M84.5,122.53 L360.5,-17.13 M84.5,127.83 L360.5,-11.83 M84.5,133.13 L360.5,-6.53 M84.5,138.43 L360.5,-1.23 M84.5,143.73 L360.5,4.07 M84.5,149.03 L360.5,9.37 M84.5,154.33 L360.5,14.67 M84.5,159.63 L360.5,19.97 M84.5,164.93 L360.5,25.27 M84.5,170.23 L360.5,30.57 M84.5,175.53 L360.5,35.87 M84.5,180.83 L360.5,41.17 M84.5,186.13 L360.5,46.47 M84.5,191.43 L360.5,51.77 M84.5,196.73 L360.5,57.07 M84.5,202.03 L360.5,62.37 M84.5,207.33 L360.5,67.67 M84.5,212.63 L360.5,72.97 M84.5,217.93 L360.5,78.27 M84.5,223.23 L360.5,83.57 M84.5,228.53 L360.5,88.87 M84.5,233.83 L360.5,94.17 M84.5,239.13 L360.5,99.47 M84.5,244.43 L360.5,104.77 M84.5,249.73 L360.5,110.07 M84.5,255.03 L360.5,115.37 M84.5,260.33 L360.5,120.67 M84.5,265.63 L360.5,125.97 M84.5,270.93 L360.5,131.27 M84.5,276.23 L360.5,136.57 M84.5,281.53 L360.5,141.87 M84.5,286.83 L360.5,147.17 M84.5,292.13 L360.5,152.47 M84.5,297.43 L360.5,157.77 M84.5,302.73 L360.5,163.07 M84.5,308.03 L360.5,168.37 M84.5,313.33 L360.5,173.67 M84.5,318.63 L360.5,178.97 M84.5,323.93 L360.5,184.27 M84.5,329.23 L360.5,189.57 M84.5,334.53 L360.5,194.87 M84.5,339.83 L360.5,200.17 M84.5,345.13 L360.5,205.47 M84.5,350.43 L360.5,210.77 M84.5,355.73 L360.5,216.07 M84.5,361.03 L360.5,221.37 M84.5,366.33 L360.5,226.67 M84.5,371.63 L360.5,231.97 M84.5,376.93 L360.5,237.27 M84.5,382.23 L360.5,242.57 M84.5,387.53 L360.5,247.87 M84.5,392.83 L360.5,253.17 M84.5,398.13 L360.5,258.47 M84.5,403.43 L360.5,263.77 M84.5,408.73 L360.5,269.07 M84.5,414.03 L360.5,274.37 M84.5,419.33 L360.5,279.67 M84.5,424.63 L360.5,284.97 M84.5,429.93 L360.5,290.27 M84.5,435.23 L360.5,295.57 M84.5,440.53 L360.5,300.87 M84.5,445.83 L360.5,306.17 M84.5,451.13 L360.5,311.47 M84.5,456.43 L360.5,316.77 M84.5,461.73 L360.5,322.07 M84.5,467.03 L360.5,327.37 M84.5,472.33 L360.5,332.67 M84.5,477.63 L360.5,337.97 M84.5,482.93 L360.5,343.27 M84.5,488.23 L360.5,348.57 M84.5,493.53 L360.5,353.87 M84.5,498.83 L360.5,359.17 M84.5,504.13 L360.5,364.47 M84.5,509.43 L360.5,369.77 M84.5,514.73 L360.5,375.07 M84.5,520.03 L360.5,380.37 M84.5,525.33 L360.5,385.67 M84.5,530.63 L360.5,390.97 M84.5,535.93 L360.5,396.27 M84.5,541.23 L360.5,401.57" stroke="#b09800" stroke-width="2.4" fill="none" clip-path="url(#cf7)" opacity="0.3"/>
<path d="M84.5,-8.89 L360.5,-148.55 M84.5,-3.59 L360.5,-143.25 M84.5,1.71 L360.5,-137.95 M84.5,7.01 L360.5,-132.65 M84.5,12.31 L360.5,-127.35 M84.5,17.61 L360.5,-122.05 M84.5,22.91 L360.5,-116.75 M84.5,28.21 L360.5,-111.45 M84.5,33.51 L360.5,-106.15 M84.5,38.81 L360.5,-100.85 M84.5,44.11 L360.5,-95.55 M84.5,49.41 L360.5,-90.25 M84.5,54.71 L360.5,-84.95 M84.5,60.01 L360.5,-79.65 M84.5,65.31 L360.5,-74.35 M84.5,70.61 L360.5,-69.05 M84.5,75.91 L360.5,-63.75 M84.5,81.21 L360.5,-58.45 M84.5,86.51 L360.5,-53.15 M84.5,91.81 L360.5,-47.85 M84.5,97.11 L360.5,-42.55 M84.5,102.41 L360.5,-37.25 M84.5,107.71 L360.5,-31.95 M84.5,113.01 L360.5,-26.65 M84.5,118.31 L360.5,-21.35 M84.5,123.61 L360.5,-16.05 M84.5,128.91 L360.5,-10.75 M84.5,134.21 L360.5,-5.45 M84.5,139.51 L360.5,-0.15 M84.5,144.81 L360.5,5.15 M84.5,150.11 L360.5,10.45 M84.5,155.41 L360.5,15.75 M84.5,160.71 L360.5,21.05 M84.5,166.01 L360.5,26.35 M84.5,171.31 L360.5,31.65 M84.5,176.61 L360.5,36.95 M84.5,181.91 L360.5,42.25 M84.5,187.21 L360.5,47.55 M84.5,192.51 L360.5,52.85 M84.5,197.81 L360.5,58.15 M84.5,203.11 L360.5,63.45 M84.5,208.41 L360.5,68.75 M84.5,213.71 L360.5,74.05 M84.5,219.01 L360.5,79.35 M84.5,224.31 L360.5,84.65 M84.5,229.61 L360.5,89.95 M84.5,234.91 L360.5,95.25 M84.5,240.21 L360.5,100.55 M84.5,245.51 L360.5,105.85 M84.5,250.81 L360.5,111.15 M84.5,256.11 L360.5,116.45 M84.5,261.41 L360.5,121.75 M84.5,266.71 L360.5,127.05 M84.5,272.01 L360.5,132.35 M84.5,277.31 L360.5,137.65 M84.5,282.61 L360.5,142.95 M84.5,287.91 L360.5,148.25 M84.5,293.21 L360.5,153.55 M84.5,298.51 L360.5,158.85 M84.5,303.81 L360.5,164.15 M84.5,309.11 L360.5,169.45 M84.5,314.41 L360.5,174.75 M84.5,319.71 L360.5,180.05 M84.5,325.01 L360.5,185.35 M84.5,330.31 L360.5,190.65 M84.5,335.61 L360.5,195.95 M84.5,340.91 L360.5,201.25 M84.5,346.21 L360.5,206.55 M84.5,351.51 L360.5,211.85 M84.5,356.81 L360.5,217.15 M84.5,362.11 L360.5,222.45 M84.5,367.41 L360.5,227.75 M84.5,372.71 L360.5,233.05 M84.5,378.01 L360.5,238.35 M84.5,383.31 L360.5,243.65 M84.5,388.61 L360.5,248.95 M84.5,393.91 L360.5,254.25 M84.5,399.21 L360.5,259.55 M84.5,404.51 L360.5,264.85 M84.5,409.81 L360.5,270.15 M84.5,415.11 L360.5,275.45 M84.5,420.41 L360.5,280.75 M84.5,425.71 L360.5,286.05 M84.5,431.01 L360.5,291.35 M84.5,436.31 L360.5,296.65 M84.5,441.61 L360.5,301.95 M84.5,446.91 L360.5,307.25 M84.5,452.21 L360.5,312.55 M84.5,457.51 L360.5,317.85 M84.5,462.81 L360.5,323.15 M84.5,468.11 L360.5,328.45 M84.5,473.41 L360.5,333.75 M84.5,478.71 L360.5,339.05 M84.5,484.01 L360.5,344.35 M84.5,489.31 L360.5,349.65 M84.5,494.61 L360.5,354.95 M84.5,499.91 L360.5,360.25 M84.5,505.21 L360.5,365.55 M84.5,510.51 L360.5,370.85 M84.5,515.81 L360.5,376.15 M84.5,521.11 L360.5,381.45 M84.5,526.41 L360.5,386.75 M84.5,531.71 L360.5,392.05 M84.5,537.01 L360.5,397.35 M84.5,542.31 L360.5,402.65" stroke="#b09800" stroke-width="0.9" fill="none" clip-path="url(#cf7)" opacity="0.6"/>
<clipPath id="cf8"><polygon points="355.5,139.0 477.0,248.0 355.5,310.3"/></clipPath>
<polygon points="355.5,139.0 477.0,248.0 355.5,310.3" fill="#c4ac00"/>
<path d="M350.5,7.90 L482.0,128.88 M350.5,13.40 L482.0,134.38 M350.5,18.90 L482.0,139.88 M350.5,24.40 L482.0,145.38 M350.5,29.90 L482.0,150.88 M350.5,35.40 L482.0,156.38 M350.5,40.90 L482.0,161.88 M350.5,46.40 L482.0,167.38 M350.5,51.90 L482.0,172.88 M350.5,57.40 L482.0,178.38 M350.5,62.90 L482.0,183.88 M350.5,68.40 L482.0,189.38 M350.5,73.90 L482.0,194.88 M350.5,79.40 L482.0,200.38 M350.5,84.90 L482.0,205.88 M350.5,90.40 L482.0,211.38 M350.5,95.90 L482.0,216.88 M350.5,101.40 L482.0,222.38 M350.5,106.90 L482.0,227.88 M350.5,112.40 L482.0,233.38 M350.5,117.90 L482.0,238.88 M350.5,123.40 L482.0,244.38 M350.5,128.90 L482.0,249.88 M350.5,134.40 L482.0,255.38 M350.5,139.90 L482.0,260.88 M350.5,145.40 L482.0,266.38 M350.5,150.90 L482.0,271.88 M350.5,156.40 L482.0,277.38 M350.5,161.90 L482.0,282.88 M350.5,167.40 L482.0,288.38 M350.5,172.90 L482.0,293.88 M350.5,178.40 L482.0,299.38 M350.5,183.90 L482.0,304.88 M350.5,189.40 L482.0,310.38 M350.5,194.90 L482.0,315.88 M350.5,200.40 L482.0,321.38 M350.5,205.90 L482.0,326.88 M350.5,211.40 L482.0,332.38 M350.5,216.90 L482.0,337.88 M350.5,222.40 L482.0,343.38 M350.5,227.90 L482.0,348.88 M350.5,233.40 L482.0,354.38 M350.5,238.90 L482.0,359.88 M350.5,244.40 L482.0,365.38 M350.5,249.90 L482.0,370.88 M350.5,255.40 L482.0,376.38 M350.5,260.90 L482.0,381.88 M350.5,266.40 L482.0,387.38 M350.5,271.90 L482.0,392.88 M350.5,277.40 L482.0,398.38 M350.5,282.90 L482.0,403.88 M350.5,288.40 L482.0,409.38 M350.5,293.90 L482.0,414.88 M350.5,299.40 L482.0,420.38 M350.5,304.90 L482.0,425.88 M350.5,310.40 L482.0,431.38 M350.5,315.90 L482.0,436.88 M350.5,321.40 L482.0,442.38 M350.5,326.90 L482.0,447.88 M350.5,332.40 L482.0,453.38 M350.5,337.90 L482.0,458.88 M350.5,343.40 L482.0,464.38 M350.5,348.90 L482.0,469.88 M350.5,354.40 L482.0,475.38 M350.5,359.90 L482.0,480.88 M350.5,365.40 L482.0,486.38 M350.5,370.90 L482.0,491.88 M350.5,376.40 L482.0,497.38 M350.5,381.90 L482.0,502.88 M350.5,387.40 L482.0,508.38 M350.5,392.90 L482.0,513.88 M350.5,398.40 L482.0,519.38 M350.5,403.90 L482.0,524.88 M350.5,409.40 L482.0,530.38 M350.5,414.90 L482.0,535.88 M350.5,420.40 L482.0,541.38 M350.5,425.90 L482.0,546.88 M350.5,431.40 L482.0,552.38 M350.5,436.90 L482.0,557.88" stroke="#806c00" stroke-width="2.4" fill="none" clip-path="url(#cf8)" opacity="0.3"/>
<path d="M350.5,8.98 L482.0,129.96 M350.5,14.48 L482.0,135.46 M350.5,19.98 L482.0,140.96 M350.5,25.48 L482.0,146.46 M350.5,30.98 L482.0,151.96 M350.5,36.48 L482.0,157.46 M350.5,41.98 L482.0,162.96 M350.5,47.48 L482.0,168.46 M350.5,52.98 L482.0,173.96 M350.5,58.48 L482.0,179.46 M350.5,63.98 L482.0,184.96 M350.5,69.48 L482.0,190.46 M350.5,74.98 L482.0,195.96 M350.5,80.48 L482.0,201.46 M350.5,85.98 L482.0,206.96 M350.5,91.48 L482.0,212.46 M350.5,96.98 L482.0,217.96 M350.5,102.48 L482.0,223.46 M350.5,107.98 L482.0,228.96 M350.5,113.48 L482.0,234.46 M350.5,118.98 L482.0,239.96 M350.5,124.48 L482.0,245.46 M350.5,129.98 L482.0,250.96 M350.5,135.48 L482.0,256.46 M350.5,140.98 L482.0,261.96 M350.5,146.48 L482.0,267.46 M350.5,151.98 L482.0,272.96 M350.5,157.48 L482.0,278.46 M350.5,162.98 L482.0,283.96 M350.5,168.48 L482.0,289.46 M350.5,173.98 L482.0,294.96 M350.5,179.48 L482.0,300.46 M350.5,184.98 L482.0,305.96 M350.5,190.48 L482.0,311.46 M350.5,195.98 L482.0,316.96 M350.5,201.48 L482.0,322.46 M350.5,206.98 L482.0,327.96 M350.5,212.48 L482.0,333.46 M350.5,217.98 L482.0,338.96 M350.5,223.48 L482.0,344.46 M350.5,228.98 L482.0,349.96 M350.5,234.48 L482.0,355.46 M350.5,239.98 L482.0,360.96 M350.5,245.48 L482.0,366.46 M350.5,250.98 L482.0,371.96 M350.5,256.48 L482.0,377.46 M350.5,261.98 L482.0,382.96 M350.5,267.48 L482.0,388.46 M350.5,272.98 L482.0,393.96 M350.5,278.48 L482.0,399.46 M350.5,283.98 L482.0,404.96 M350.5,289.48 L482.0,410.46 M350.5,294.98 L482.0,415.96 M350.5,300.48 L482.0,421.46 M350.5,305.98 L482.0,426.96 M350.5,311.48 L482.0,432.46 M350.5,316.98 L482.0,437.96 M350.5,322.48 L482.0,443.46 M350.5,327.98 L482.0,448.96 M350.5,333.48 L482.0,454.46 M350.5,338.98 L482.0,459.96 M350.5,344.48 L482.0,465.46 M350.5,349.98 L482.0,470.96 M350.5,355.48 L482.0,476.46 M350.5,360.98 L482.0,481.96 M350.5,366.48 L482.0,487.46 M350.5,371.98 L482.0,492.96 M350.5,377.48 L482.0,498.46 M350.5,382.98 L482.0,503.96 M350.5,388.48 L482.0,509.46 M350.5,393.98 L482.0,514.96 M350.5,399.48 L482.0,520.46 M350.5,404.98 L482.0,525.96 M350.5,410.48 L482.0,531.46 M350.5,415.98 L482.0,536.96 M350.5,421.48 L482.0,542.46 M350.5,426.98 L482.0,547.96 M350.5,432.48 L482.0,553.46 M350.5,437.98 L482.0,558.96" stroke="#806c00" stroke-width="0.9" fill="none" clip-path="url(#cf8)" opacity="0.6"/>
<clipPath id="cf9"><polygon points="89.5,273.7 64.5,339.0 89.5,359.6"/></clipPath>
<polygon points="89.5,273.7 64.5,339.0 89.5,359.6" fill="#b49c00"/>
<path d="M59.5,238.20 L94.5,250.45 M59.5,243.20 L94.5,255.45 M59.5,248.20 L94.5,260.45 M59.5,253.20 L94.5,265.45 M59.5,258.20 L94.5,270.45 M59.5,263.20 L94.5,275.45 M59.5,268.20 L94.5,280.45 M59.5,273.20 L94.5,285.45 M59.5,278.20 L94.5,290.45 M59.5,283.20 L94.5,295.45 M59.5,288.20 L94.5,300.45 M59.5,293.20 L94.5,305.45 M59.5,298.20 L94.5,310.45 M59.5,303.20 L94.5,315.45 M59.5,308.20 L94.5,320.45 M59.5,313.20 L94.5,325.45 M59.5,318.20 L94.5,330.45 M59.5,323.20 L94.5,335.45 M59.5,328.20 L94.5,340.45 M59.5,333.20 L94.5,345.45 M59.5,338.20 L94.5,350.45 M59.5,343.20 L94.5,355.45 M59.5,348.20 L94.5,360.45 M59.5,353.20 L94.5,365.45 M59.5,358.20 L94.5,370.45 M59.5,363.20 L94.5,375.45 M59.5,368.20 L94.5,380.45 M59.5,373.20 L94.5,385.45" stroke="#7d6900" stroke-width="2.2" fill="none" clip-path="url(#cf9)" opacity="0.3"/>
<path d="M59.5,239.19 L94.5,251.44 M59.5,244.19 L94.5,256.44 M59.5,249.19 L94.5,261.44 M59.5,254.19 L94.5,266.44 M59.5,259.19 L94.5,271.44 M59.5,264.19 L94.5,276.44 M59.5,269.19 L94.5,281.44 M59.5,274.19 L94.5,286.44 M59.5,279.19 L94.5,291.44 M59.5,284.19 L94.5,296.44 M59.5,289.19 L94.5,301.44 M59.5,294.19 L94.5,306.44 M59.5,299.19 L94.5,311.44 M59.5,304.19 L94.5,316.44 M59.5,309.19 L94.5,321.44 M59.5,314.19 L94.5,326.44 M59.5,319.19 L94.5,331.44 M59.5,324.19 L94.5,336.44 M59.5,329.19 L94.5,341.44 M59.5,334.19 L94.5,346.44 M59.5,339.19 L94.5,351.44 M59.5,344.19 L94.5,356.44 M59.5,349.19 L94.5,361.44 M59.5,354.19 L94.5,366.44 M59.5,359.19 L94.5,371.44 M59.5,364.19 L94.5,376.44 M59.5,369.19 L94.5,381.44 M59.5,374.19 L94.5,386.44" stroke="#7d6900" stroke-width="0.9" fill="none" clip-path="url(#cf9)" opacity="0.6"/>
<polygon points="89.5,273.7 355.5,139.0 477.0,248.0 207.0,386.5 113.0,379.0 64.5,339.0" fill="none" stroke="#6a5a00" stroke-width="0.8"/>
</svg>
</div>

<!-- slider -->
<div class="abs" style="left:507px;top:126px;width:3px;height:483px;background:#3a8df6;border-radius:1px"></div>
<div class="abs" style="left:500px;top:112px;width:17px;height:17px;border-radius:50%;background:#fff;border:1px solid #b0b0b0;box-shadow:0 0.5px 1px rgba(0,0,0,.2)"></div>
<div class="abs" style="left:497px;top:619px;font-size:11.5px">9.95</div>

<!-- segmented -->
<div class="abs" id="seg">
 <div class="tab" style="left:0;width:41px">3D</div>
 <div class="tab" style="left:41px;width:40px;border-left:1px solid #c8c8c8">2D</div>
 <div class="tab" style="left:81px;width:72px;background:linear-gradient(#69acfb,#1a78f5);color:#fff">Preview</div>
 <div class="tab" style="left:153px;width:64px">Layers</div>
</div>

<!-- right panel -->
<div class="lbl" style="left:500.5px;top:112px">Print settings:</div>
<div class="lbl" style="left:500.5px;top:141px">Filament:</div>
<div class="lbl" style="left:500.5px;top:170px">Printer:</div>
<div class="combo" style="top:104px"><span>03 line 25%</span><div class="step"><svg width="17" height="20" viewBox="0 0 17 20"><path d="M5,8 L8.5,5 L12,8 M5,12 L8.5,15 L12,12" fill="none" stroke="#fff" stroke-width="1.4"/></svg></div></div>
<div class="combo" style="top:133px"><span>ABS Fillamentum</span><div class="step"><svg width="17" height="20" viewBox="0 0 17 20"><path d="M5,8 L8.5,5 L12,8 M5,12 L8.5,15 L12,12" fill="none" stroke="#fff" stroke-width="1.4"/></svg></div></div>
<div class="combo" style="top:162px"><span>Rebell II 0.5</span><div class="step"><svg width="17" height="20" viewBox="0 0 17 20"><path d="M5,8 L8.5,5 L12,8 M5,12 L8.5,15 L12,12" fill="none" stroke="#fff" stroke-width="1.4"/></svg></div></div>
<div class="btn" style="left:638px;width:113px"><svg class="abs" style="left:3px;top:3px" width="20" height="18" viewBox="0 0 20 18">
  <path d="M1,5 L8,2 L15,5 L15,11 L8,14.5 L1,11 Z" fill="#e3e3e3" stroke="#9c9c9c" stroke-width="0.7"/>
  <path d="M1,5 L8,8 L15,5" fill="none" stroke="#b5b5b5" stroke-width="0.6"/>
  <ellipse cx="5" cy="4.3" rx="2" ry="1.1" fill="#fafafa" stroke="#aaa" stroke-width="0.5"/><ellipse cx="11" cy="4.3" rx="2" ry="1.1" fill="#fafafa" stroke="#aaa" stroke-width="0.5"/>
  <path d="M8,11.5 h4 v-3 l5,4.5 l-5,4.5 v-3 h-4 Z" fill="#55b24a" stroke="#2f7f2a" stroke-width="0.6"/>
 </svg><span class="abs" style="left:25px;top:3px">Export STL...</span></div>
<div class="btn" style="left:757px;width:136px"><svg class="abs" style="left:3px;top:3px" width="20" height="18" viewBox="0 0 20 18">
  <g transform="translate(8,8)"><path d="M-1,-7 L1,-7 L1.6,-5 L2.7,-4.5 L4.6,-5.6 L5.6,-4.6 L4.5,-2.7 L5,-1.6 L7,-1 L7,1 L5,1.6 L4.5,2.7 L5.6,4.6 L4.6,5.6 L2.7,4.5 L1.6,5 L1,7 L-1,7 L-1.6,5 L-2.7,4.5 L-4.6,5.6 L-5.6,4.6 L-4.5,2.7 L-5,1.6 L-7,1 L-7,-1 L-5,-1.6 L-4.5,-2.7 L-5.6,-4.6 L-4.6,-5.6 L-2.7,-4.5 L-1.6,-5 Z" fill="#cfcfcf" stroke="#8e8e8e" stroke-width="0.6"/><circle r="2.3" fill="#eee" stroke="#999" stroke-width="0.5"/></g>
  <path d="M8,11.5 h4 v-3 l5,4.5 l-5,4.5 v-3 h-4 Z" fill="#55b24a" stroke="#2f7f2a" stroke-width="0.6"/>
 </svg><span class="abs" style="left:25px;top:3px">Export G-code...</span></div>
<div class="abs" id="list">
 <div class="abs" style="left:1px;top:2px;width:347px;height:15px;background:#f4f4f4;border-bottom:1px solid #e2e2e2"></div>
 <div class="abs" style="left:146px;top:4px;width:2px;height:11px;background:#d9d9d9"></div>
 <div class="abs" style="left:191px;top:4px;width:2px;height:11px;background:#d9d9d9"></div>
 <div class="abs" style="left:243px;top:4px;width:2px;height:11px;background:#d9d9d9"></div>
 <div class="abs" style="left:1px;top:18px;width:242px;height:19px;background:#d3d3d3"></div>
 <div class="it" style="left:5px;top:4px">Name</div>
 <div class="it" style="left:150px;top:4px">Copies</div>
 <div class="it" style="left:202px;top:4px">Scale</div>
 <div class="it" style="left:1.5px;top:21px;font-size:11px">xt60_cover_v2p4.stl</div>
 <div class="it" style="left:162px;top:21px;font-size:11px">1</div>
 <div class="it" style="left:200px;top:21px;font-size:11px;letter-spacing:-0.6px">100%</div>
</div>
<div class="it" style="left:558px;top:587px;color:#222">Info</div>
<div class="abs" id="info"></div>
<div class="it" style="left:558px;top:609px">Size:</div>
<div class="it" style="left:616px;top:609px">19.20 x 12.00 x 10.00</div>
<div class="it" style="left:761px;top:609px">Volume:</div>
<div class="it" style="left:823px;top:609px">818.35</div>
<div class="it" style="left:558px;top:628px">Facets:</div>
<div class="it" style="left:616px;top:628px">280 (1 shells)</div>
<div class="it" style="left:761px;top:628px">Materials:</div>
<div class="it" style="left:823px;top:628px">1</div>
<div class="it" style="left:558px;top:647px">Manifold:</div>
<div class="it" style="left:616px;top:647px">Yes</div>
</body></html>
